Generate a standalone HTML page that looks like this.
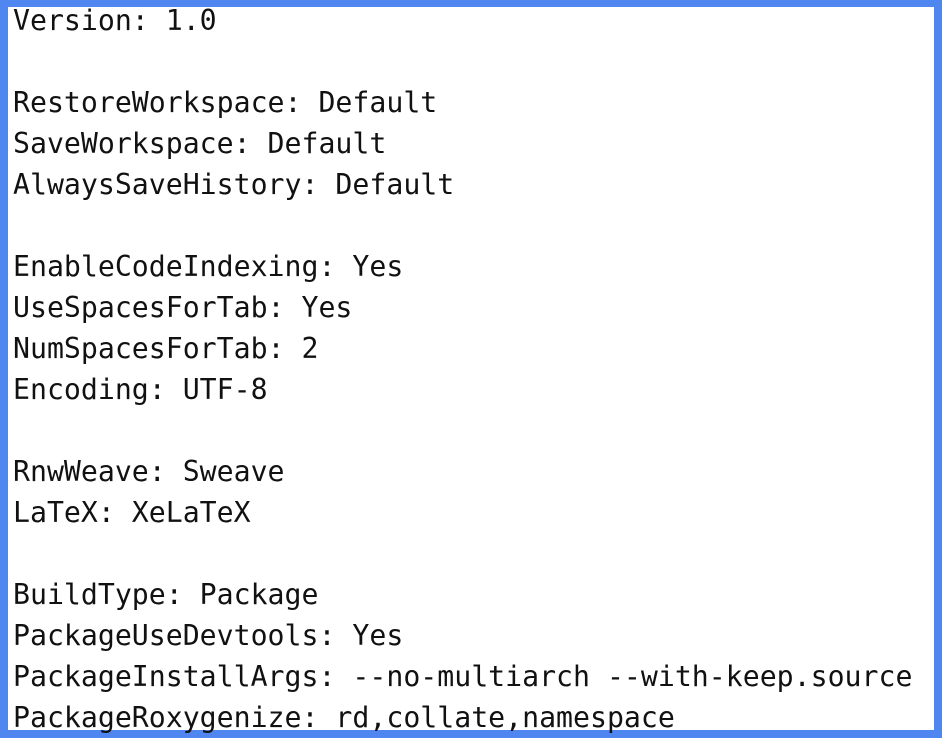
<!DOCTYPE html>
<html><head><meta charset="utf-8"><style>
html,body{margin:0;padding:0;background:#fff;}
body{width:942px;height:740px;position:relative;overflow:hidden;}
.frame{position:absolute;left:0;top:0;width:926px;height:723px;border-style:solid;border-color:#4f86f0;border-width:7px 8px 8px 8px;background:#fff;}
pre{position:absolute;left:13px;top:0;margin:0;font-family:"DejaVu Sans Mono","Liberation Mono",monospace;font-size:28.2px;line-height:41px;color:#111;}
</style></head><body>
<div class="frame"></div>
<pre>Version: 1.0

RestoreWorkspace: Default
SaveWorkspace: Default
AlwaysSaveHistory: Default

EnableCodeIndexing: Yes
UseSpacesForTab: Yes
NumSpacesForTab: 2
Encoding: UTF-8

RnwWeave: Sweave
LaTeX: XeLaTeX

BuildType: Package
PackageUseDevtools: Yes
PackageInstallArgs: --no-multiarch --with-keep.source
PackageRoxygenize: rd,collate,namespace</pre>
</body></html>
